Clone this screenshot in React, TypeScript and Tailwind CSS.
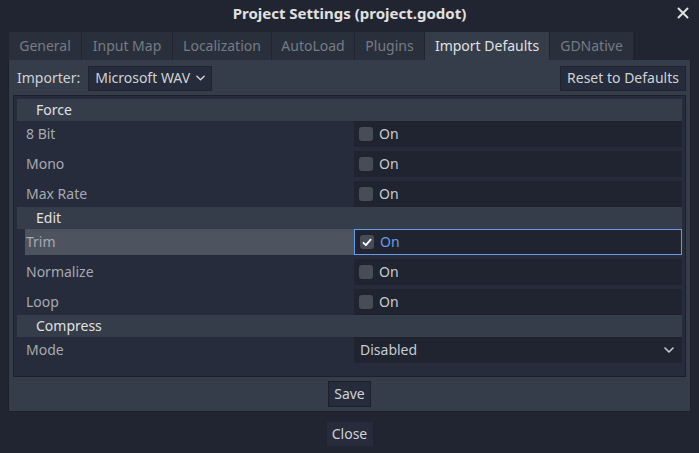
import { useState } from 'react';

type Row =
  | { kind: 'section'; label: string }
  | { kind: 'check'; label: string; checked?: boolean; selected?: boolean }
  | { kind: 'enum'; label: string; value: string };

const rows: Row[] = [
  { kind: 'section', label: 'Force' },
  { kind: 'check', label: '8 Bit' },
  { kind: 'check', label: 'Mono' },
  { kind: 'check', label: 'Max Rate' },
  { kind: 'section', label: 'Edit' },
  { kind: 'check', label: 'Trim', checked: true, selected: true },
  { kind: 'check', label: 'Normalize' },
  { kind: 'check', label: 'Loop' },
  { kind: 'section', label: 'Compress' },
  { kind: 'enum', label: 'Mode', value: 'Disabled' },
];

const tabs = [
  { name: 'General', w: 'w-[72px]' },
  { name: 'Input Map', w: 'w-[90px]' },
  { name: 'Localization', w: 'w-[98px]' },
  { name: 'AutoLoad', w: 'w-[82px]' },
  { name: 'Plugins', w: 'w-[69px]' },
  { name: 'Import Defaults', w: 'w-[124px]' },
  { name: 'GDNative', w: 'w-[83px]' },
];

function Chevron({ className }: { className?: string }) {
  return (
    <svg width="10" height="6" viewBox="0 0 10 6" className={className}>
      <path d="M1 1l4 4 4-4" fill="none" stroke="currentColor" strokeWidth="1.6" strokeLinecap="round" strokeLinejoin="round" />
    </svg>
  );
}

function CheckBox({ checked }: { checked?: boolean }) {
  return (
    <div className="w-[14px] h-[14px] rounded-[3px] bg-[#474c57] flex items-center justify-center">
      {checked && (
        <svg width="10" height="9" viewBox="0 0 10 9">
          <path d="M1.5 4.8l2.4 2.4L8.6 1.6" fill="none" stroke="#ffffff" strokeWidth="1.8" strokeLinecap="round" strokeLinejoin="round" />
        </svg>
      )}
    </div>
  );
}

function PropertyRow({ row, first }: { row: Row; first: boolean }) {
  if (row.kind === 'section') {
    return (
      <div className="h-[22px] bg-[#353c4a] flex items-center pl-[19px] text-[#e0e0e0]">
        {row.label}
      </div>
    );
  }
  return (
    <div className={`h-[26px] flex ${first ? '' : 'mt-[4px]'}`}>
      <div className="w-[337px] flex items-center pl-[8px]">
        <div
          className={`h-full w-full flex items-center pl-[1px] text-[#a6a9b0] ${
            row.kind === 'check' && row.selected ? 'bg-[#4e5360]' : ''
          }`}
        >
          {row.label}
        </div>
      </div>
      {row.kind === 'check' ? (
        <div
          className={`flex-1 flex items-center gap-[6px] pl-[5px] bg-[#1f2430] ${
            row.selected ? 'border border-[#699ce8] pl-[4px] text-[#699ce8]' : 'text-[#c8cbd0]'
          }`}
        >
          <CheckBox checked={row.checked} />
          <span>On</span>
        </div>
      ) : (
        <div className="flex-1 flex items-center justify-between pl-[6px] pr-[8px] bg-[#1f2430] text-[#c8cbd0]">
          <span>{row.value}</span>
          <Chevron className="text-[#c8cbd0]" />
        </div>
      )}
    </div>
  );
}

export default function App() {
  const [active] = useState('Import Defaults');

  return (
    <div
      className="w-[699px] h-[453px] bg-[#202531] flex flex-col text-[14px] leading-none whitespace-nowrap"
      style={{ fontFamily: '"Noto Sans", "Open Sans", sans-serif' }}
    >
      <div className="relative h-[32px] flex items-center justify-center">
        <span className="font-bold text-[15px] text-[#e0e0e0] -mt-[5px]">Project Settings (project.godot)</span>
        <svg width="12" height="12" viewBox="0 0 12 12" className="absolute right-[10px] top-[7px]">
          <path d="M1.5 1.5l9 9M10.5 1.5l-9 9" stroke="#e0e0e0" strokeWidth="2" strokeLinecap="round" />
        </svg>
      </div>

      <div className="flex pl-[9px] h-[28px] gap-[1px]">
        {tabs.map((t) => (
          <div
            key={t.name}
            className={`${t.w} h-full flex items-center justify-center ${
              t.name === active ? 'bg-[#363d4a] text-[#e0e0e0]' : 'bg-[#2a2f3c] text-[#767b85]'
            }`}
          >
            {t.name}
          </div>
        ))}
      </div>

      <div className="ml-[8px] w-[683px] h-[352px] bg-[#363d4a] border border-[#1c202a] border-t-0 flex flex-col">
        <div className="h-[35px] shrink-0 flex items-center justify-between pl-[8px] pr-[4px] pt-[1px]">
          <div className="flex items-center gap-[8px]">
            <span className="text-[#d0d2d6]">Importer:</span>
            <div className="h-[25px] w-[124px] bg-[#262c3b] border border-[#1f2430] flex items-center gap-[6px] px-[6px] text-[#d0d2d6]">
              <span>Microsoft WAV</span>
              <Chevron className="text-[#d0d2d6]" />
            </div>
          </div>
          <div className="h-[25px] w-[126px] bg-[#262c3b] border border-[#1f2430] flex items-center justify-center text-[#d0d2d6]">
            Reset to Defaults
          </div>
        </div>

        <div className="ml-[4px] w-[673px] h-[282px] shrink-0 bg-[#262c3b] border border-[#1c202a] pt-[3px] pl-[3px] pr-[3px]">
          {rows.map((r, i) => (
            <PropertyRow key={r.label} row={r} first={i === 0 || rows[i - 1].kind === 'section'} />
          ))}
        </div>

        <div className="flex-1 flex items-center justify-center">
          <div className="h-[26px] w-[43px] bg-[#262c3b] border border-[#1c202a] flex items-center justify-center text-[#d0d2d6]">
            Save
          </div>
        </div>
      </div>

      <div className="flex-1 flex items-center justify-center pt-[2px]">
        <div className="h-[24px] w-[46px] bg-[#262c3b] flex items-center justify-center text-[#d0d2d6]">
          Close
        </div>
      </div>
    </div>
  );
}
